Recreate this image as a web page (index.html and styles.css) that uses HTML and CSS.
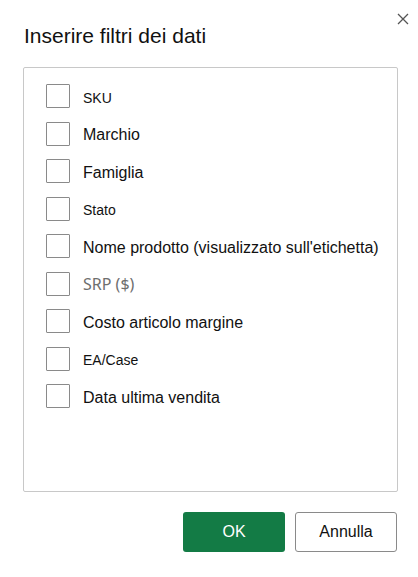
FILE: index.html
```html
<!DOCTYPE html>
<html lang="it">
<head>
    <meta charset="UTF-8">
    <meta name="viewport" content="width=device-width, initial-scale=1.0">
    <title>Inserire filtri dei dati</title>
    <link rel="stylesheet" href="styles.css">
</head>
<body>

    <div class="dialog">
        <!-- Header -->
        <div class="dialog-header">
            <h2>Inserire filtri dei dati</h2>
            <button class="close-button" aria-label="Chiudi">
                <svg width="12" height="12" viewBox="0 0 12 12">
                    <path d="M1 1 L11 11 M11 1 L1 11" stroke="#555" stroke-width="1.3" fill="none"/>
                </svg>
            </button>
        </div>

        <!-- Filter list -->
        <div class="filter-panel">
            <label class="filter-row small"><span class="box"></span><span class="text">SKU</span></label>
            <label class="filter-row"><span class="box"></span><span class="text">Marchio</span></label>
            <label class="filter-row"><span class="box"></span><span class="text">Famiglia</span></label>
            <label class="filter-row small"><span class="box"></span><span class="text">Stato</span></label>
            <label class="filter-row"><span class="box"></span><span class="text">Nome prodotto (visualizzato sull'etichetta)</span></label>
            <label class="filter-row muted"><span class="box"></span><span class="text">SRP ($)</span></label>
            <label class="filter-row"><span class="box"></span><span class="text">Costo articolo margine</span></label>
            <label class="filter-row small"><span class="box"></span><span class="text">EA/Case</span></label>
            <label class="filter-row"><span class="box"></span><span class="text">Data ultima vendita</span></label>
        </div>

        <!-- Footer -->
        <div class="dialog-footer">
            <button class="ok-button">OK</button>
            <button class="cancel-button">Annulla</button>
        </div>
    </div>

</body>
</html>
```

FILE: styles.css
```css
/* Global Styles */
body {
    font-family: 'Liberation Sans', Arial, sans-serif;
    margin: 0;
    padding: 0;
    background-color: #ffffff;
    color: #111;
}

.dialog {
    width: 418px;
    height: 577px;
    box-sizing: border-box;
    padding: 0 20px 0 23px;
}

/* Header */
.dialog-header {
    display: flex;
    justify-content: space-between;
    align-items: flex-start;
    height: 67px;
}

.dialog-header h2 {
    font-size: 21px;
    font-weight: normal;
    margin: 24px 0 0 1px;
    line-height: 24px;
    color: #111;
}

.close-button {
    background: none;
    border: none;
    padding: 0;
    margin: 13px -11px 0 0;
    width: 12px;
    height: 12px;
    cursor: pointer;
}

.close-button svg {
    display: block;
}

/* Filter panel */
.filter-panel {
    width: 375px;
    height: 425px;
    box-sizing: border-box;
    border: 1px solid #c8c8c8;
    border-radius: 2px;
    padding: 16px 0 0 22px;
    display: flex;
    flex-direction: column;
    gap: 13.5px;
}

.filter-row {
    display: flex;
    align-items: center;
    height: 24px;
    font-size: 16px;
    color: #111;
    cursor: pointer;
}

.filter-row .text {
    margin-top: 3px;
}

.filter-row.small {
    font-size: 14px;
}

.filter-row.muted {
    font-family: 'Noto Sans', sans-serif;
    color: #6e6e6e;
}

.filter-row.muted .text {
    margin-top: 1px;
}

.box {
    width: 24px;
    height: 24px;
    box-sizing: border-box;
    border: 1px solid #8a8a8a;
    border-radius: 1px;
    margin-right: 13px;
    flex-shrink: 0;
}

/* Footer */
.dialog-footer {
    display: flex;
    justify-content: flex-end;
    gap: 10px;
    margin-top: 20px;
    width: 374px;
}

.ok-button, .cancel-button {
    width: 102px;
    height: 40px;
    border-radius: 3px;
    font-family: 'Liberation Sans', Arial, sans-serif;
    font-size: 16px;
    cursor: pointer;
}

.ok-button {
    background-color: #137b45;
    border: none;
    color: #ffffff;
}

.cancel-button {
    background-color: #ffffff;
    border: 1px solid #8a8a8a;
    color: #111;
}
```
